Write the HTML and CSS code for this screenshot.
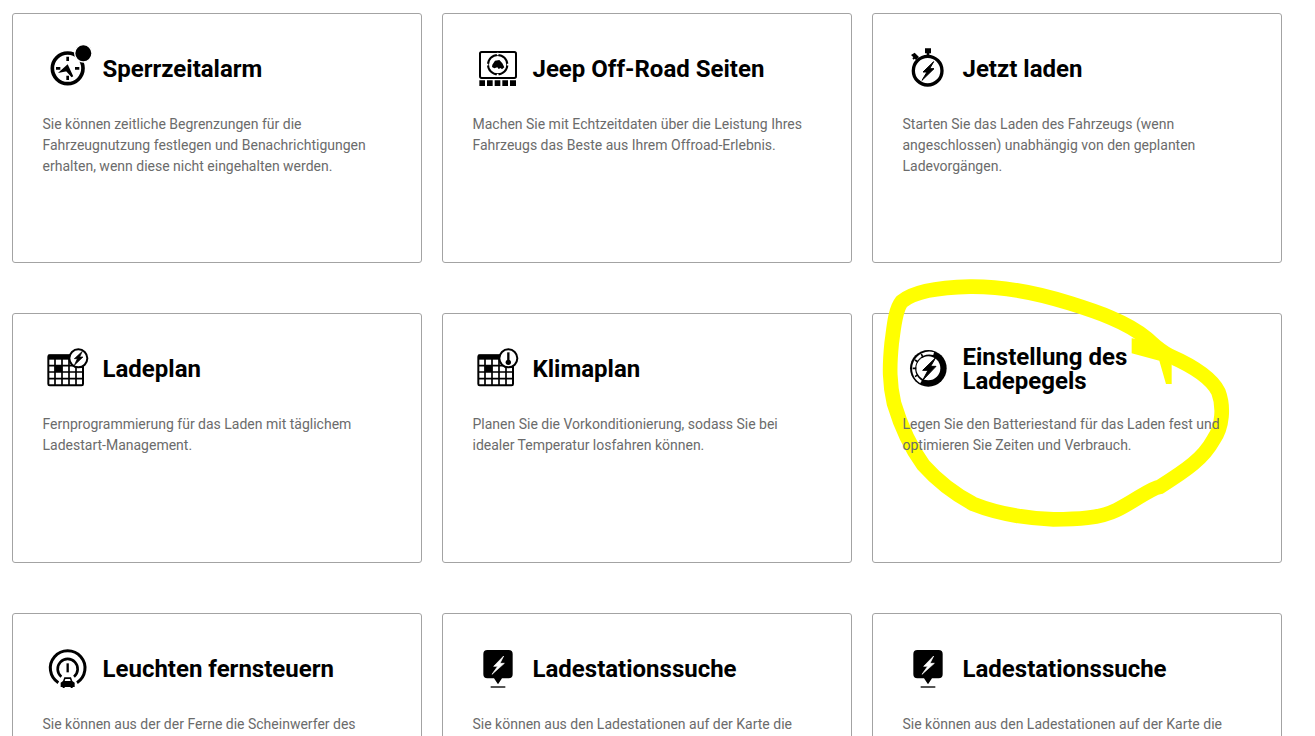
FILE: index.html
```html
<!DOCTYPE html>
<html lang="de">
<head>
    <meta charset="UTF-8">
    <meta name="viewport" content="width=device-width, initial-scale=1.0">
    <title>Funktionen</title>
    <link rel="stylesheet" href="styles.css">
</head>
<body>
    <div class="card-grid">
        <div class="card">
            <div class="card-header">
                <svg class="card-icon" viewBox="36 39 180 150">
                    <circle cx="113" cy="115" r="46" fill="#fff" stroke="#000" stroke-width="11"/>
                    <path d="M113 80v13M113 137v13M78 115h13M135 115h13" stroke="#000" stroke-width="8"/>
                    <path d="M94 124l18-16 15 32-17-19z" fill="#000" stroke="#000" stroke-width="6"/>
                    <circle cx="160" cy="70" r="26" fill="#000" stroke="#fff" stroke-width="4"/>
                </svg>
                <h2>Sperrzeitalarm</h2>
            </div>
            <p>Sie können zeitliche Begrenzungen für die Fahrzeugnutzung festlegen und Benachrichtigungen erhalten, wenn diese nicht eingehalten werden.</p>
        </div>
        <div class="card">
            <div class="card-header">
                <svg class="card-icon" viewBox="36 39 180 150">
                    <rect x="60" y="66" width="108" height="78" rx="5" fill="none" stroke="#000" stroke-width="6"/>
                    <circle cx="113" cy="104" r="29" fill="none" stroke="#000" stroke-width="6"/>
                    <path d="M113 68v8M113 132v8M77 104h8M141 104h8" stroke="#fff" stroke-width="5"/>
                    <path d="M97 104l8-12 13-2 9 10 6 12-7 6-4-4-6 3-4-5-9 3-7-4z" fill="#000"/>
                    <path d="M58 151h17v17H58zM81 151h17v17H81zM104 151h17v17h-17zM127 151h17v17h-17zM150 151h18v17h-18z" fill="#000"/>
                </svg>
                <h2>Jeep Off-Road Seiten</h2>
            </div>
            <p>Machen Sie mit Echtzeitdaten über die Leistung Ihres Fahrzeugs das Beste aus Ihrem Offroad-Erlebnis.</p>
        </div>
        <div class="card">
            <div class="card-header">
                <svg class="card-icon" viewBox="36 39 180 150">
                    <circle cx="113" cy="122" r="43" fill="none" stroke="#000" stroke-width="10"/>
                    <path d="M105 55h18v15h-5v12h-8V70h-5z" fill="#000"/>
                    <path d="M74 68l13 13-9 9-4-4-3 3-4-4 3-3-7-7z" fill="#000"/>
                    <path d="M131 95l-32 31h12l-15 25 36-35h-13l12-21z" fill="#000" stroke="#000" stroke-width="3"/>
                </svg>
                <h2>Jetzt laden</h2>
            </div>
            <p>Starten Sie das Laden des Fahrzeugs (wenn angeschlossen) unabhängig von den geplanten Ladevorgängen.</p>
        </div>

        <div class="card">
            <div class="card-header">
                <svg class="card-icon" viewBox="36 24 180 150">
                    <rect x="55" y="61" width="104" height="90" rx="4" fill="#fff" stroke="#000" stroke-width="6"/>
                    <rect x="55" y="59" width="104" height="15" fill="#000"/>
                    <rect x="74" y="91" width="23" height="20" fill="#000"/>
                    <path d="M75 61v90M96 61v90M117 61v90M138 61v90M55 92h104M55 111h104M55 131h104" stroke="#000" stroke-width="5"/>
                    <circle cx="145" cy="70" r="27" fill="#fff" stroke="#000" stroke-width="6"/>
                    <path d="M157 49l-24 22h9l-9 20 26-25h-10l8-17z" fill="#000" stroke="#000" stroke-width="2"/>
                </svg>
                <h2>Ladeplan</h2>
            </div>
            <p>Fernprogrammierung für das Laden mit täglichem Ladestart-Management.</p>
        </div>
        <div class="card">
            <div class="card-header">
                <svg class="card-icon" viewBox="36 24 180 150">
                    <rect x="55" y="61" width="104" height="90" rx="4" fill="#fff" stroke="#000" stroke-width="6"/>
                    <rect x="55" y="59" width="104" height="15" fill="#000"/>
                    <rect x="74" y="91" width="23" height="20" fill="#000"/>
                    <path d="M75 61v90M96 61v90M117 61v90M138 61v90M55 92h104M55 111h104M55 131h104" stroke="#000" stroke-width="5"/>
                    <circle cx="145" cy="70" r="27" fill="#fff" stroke="#000" stroke-width="6"/>
                    <path d="M145 52v28" stroke="#000" stroke-width="7"/>
                    <circle cx="145" cy="82" r="8" fill="#000"/>
                </svg>
                <h2>Klimaplan</h2>
            </div>
            <p>Planen Sie die Vorkonditionierung, sodass Sie bei idealer Temperatur losfahren können.</p>
        </div>
        <div class="card">
            <div class="card-header">
                <svg class="card-icon" viewBox="21 9 180 150">
                    <circle cx="100" cy="85" r="55" fill="#000"/>
                    <circle cx="100" cy="85" r="36" fill="#fff"/>
                    <path d="M78 126A47 47 0 0 1 116 41" fill="none" stroke="#fff" stroke-width="9"/>
                    <path d="M53 85h11M60 60l9 6M79 42l5 10M60 110l9-6" stroke="#000" stroke-width="5"/>
                    <path d="M122 53L83 91h16l-16 30 40-42h-16l15-26z" fill="#000" stroke="#000" stroke-width="3"/>
                </svg>
                <h2>Einstellung des Ladepegels</h2>
            </div>
            <p>Legen Sie den Batteriestand für das Laden fest und optimieren Sie Zeiten und Verbrauch.</p>
        </div>

        <div class="card">
            <div class="card-header">
                <svg class="card-icon" viewBox="36 24 180 150">
                    <path d="M85 143A52 52 0 1 1 141 143" fill="none" stroke="#000" stroke-width="9"/>
                    <path d="M94 125A30 30 0 1 1 132 125" fill="none" stroke="#000" stroke-width="8"/>
                    <path d="M113 85v27" stroke="#000" stroke-width="7"/>
                    <path d="M103 127h20l4 11 7 5v13h-6v3h-6v-3h-18v3h-6v-3h-6v-13l7-5z" fill="#000"/>
                    <path d="M106 132h14l2 6h-18z" fill="#fff"/>
                </svg>
                <h2>Leuchten fernsteuern</h2>
            </div>
            <p>Sie können aus der der Ferne die Scheinwerfer des</p>
        </div>
        <div class="card">
            <div class="card-header">
                <svg class="card-icon" viewBox="36 24 180 150">
                    <path d="M82 45h64a12 12 0 0 1 12 12v61a12 12 0 0 1-12 12h-20l-12 18-12-18H82a12 12 0 0 1-12-12V57a12 12 0 0 1 12-12z" fill="#000"/>
                    <path d="M92 156h44" stroke="#000" stroke-width="4"/>
                    <path d="M131 63l-30 31h12l-17 24 37-33h-13l11-22z" fill="#fff" stroke="#fff" stroke-width="2"/>
                </svg>
                <h2>Ladestationssuche</h2>
            </div>
            <p>Sie können aus den Ladestationen auf der Karte die</p>
        </div>
        <div class="card">
            <div class="card-header">
                <svg class="card-icon" viewBox="36 24 180 150">
                    <path d="M82 45h64a12 12 0 0 1 12 12v61a12 12 0 0 1-12 12h-20l-12 18-12-18H82a12 12 0 0 1-12-12V57a12 12 0 0 1 12-12z" fill="#000"/>
                    <path d="M92 156h44" stroke="#000" stroke-width="4"/>
                    <path d="M131 63l-30 31h12l-17 24 37-33h-13l11-22z" fill="#fff" stroke="#fff" stroke-width="2"/>
                </svg>
                <h2>Ladestationssuche</h2>
            </div>
            <p>Sie können aus den Ladestationen auf der Karte die</p>
        </div>
    </div>

    <!-- Markierung von Hand ueber der Karte -->
    <svg class="scribble" viewBox="0 0 1140 810">
        <path d="M95 95C130 65 210 52 300 50C400 49 500 68 600 100C680 125 770 155 830 205C850 222 865 240 900 258C950 280 1020 315 1045 365C1062 410 1058 470 1030 510C1000 565 950 600 870 650C840 655 800 690 740 720C690 745 620 748 550 748C470 745 380 730 310 702C250 670 200 630 160 585C120 530 90 460 72 400C58 340 58 290 65 220C72 170 75 120 95 95Z" fill="none" stroke="#ffff00" stroke-width="44"/>
        <path d="M785 205L860 215L905 285V342H888L868 272L785 250Z" fill="#ffff00"/>
    </svg>
</body>
</html>
```

FILE: styles.css
```css
* {
    margin: 0;
    padding: 0;
    box-sizing: border-box;
}
html, body {
    height: 100%;
    overflow: hidden;
}
body {
    font-family: Roboto, "Liberation Sans", sans-serif;
    background-color: #fff;
}
.card-grid {
    display: grid;
    grid-template-columns: repeat(3, 410px);
    grid-auto-rows: 250px;
    column-gap: 20px;
    row-gap: 50px;
    padding: 13px 0 0 12px;
}
.card {
    border: 1px solid #a3a3a3;
    border-radius: 3px;
    padding: 29px 29px 29px 29.5px;
    background-color: #fff;
}
.card-header {
    display: flex;
    align-items: center;
    height: 50px;
    margin-bottom: 21px;
}
.card-icon {
    flex: none;
    width: 60px;
    height: 50px;
    margin-left: -0.5px;
    margin-right: 0.5px;
}
.card-header h2 {
    font-size: 24px;
    line-height: 24px;
    font-weight: 700;
    color: #000;
    padding-top: 2px;
}
/* text stays readable on top of the yellow marker */
.card p {
    position: relative;
    z-index: 1;
    font-size: 14px;
    line-height: 21px;
    color: #6b6b6b;
}
.scribble {
    position: absolute;
    left: 870px;
    top: 270px;
    width: 380px;
    height: 270px;
}
```
